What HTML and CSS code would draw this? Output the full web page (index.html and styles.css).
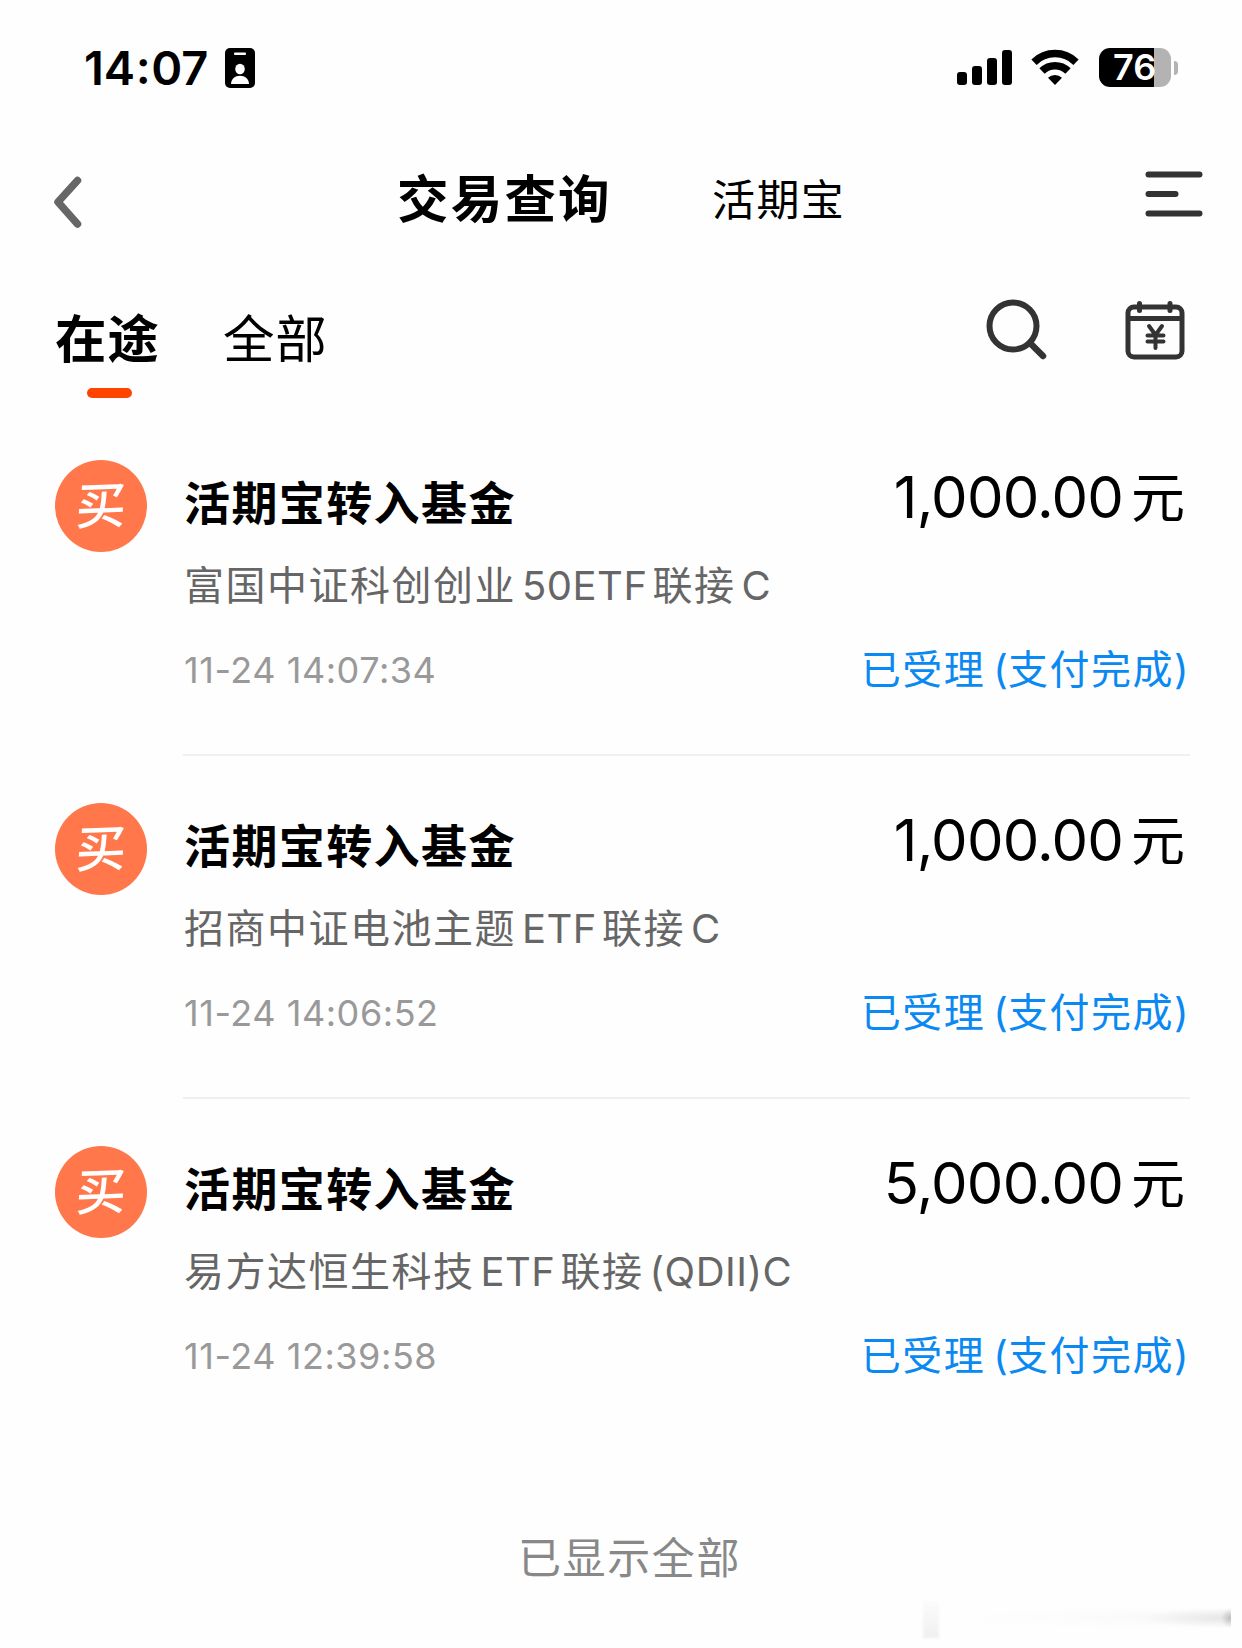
FILE: index.html
```html
<!DOCTYPE html>
<html lang="zh-CN">
<head>
    <meta charset="UTF-8">
    <meta name="viewport" content="width=device-width, initial-scale=1.0">
    <title>交易查询</title>
    <link rel="stylesheet" href="styles.css">
</head>
<body>
    <div class="status-bar">
        <span class="time">14<span class="colon">:</span>07</span>
        <svg class="id-icon" width="30" height="40" viewBox="0 0 30 40">
            <rect width="30" height="40" rx="5"/>
            <rect x="9" y="4.5" width="12" height="2.5" rx="1" fill="#fff"/>
            <ellipse cx="15" cy="21" rx="4.8" ry="5.3" fill="#fff"/>
            <path d="M6 36c0-5 4-8.300 9-8.300s9 3.300 9 8.300z" fill="#fff"/>
        </svg>
        <div class="status-right">
            <svg class="signal" width="55" height="35" viewBox="0 0 55 35">
                <rect x="0" y="22" width="10" height="13" rx="3"/>
                <rect x="15" y="16" width="10" height="19" rx="3"/>
                <rect x="30" y="8" width="10" height="27" rx="3"/>
                <rect x="45" y="0" width="10" height="35" rx="3"/>
            </svg>
            <svg class="wifi" width="48" height="36" viewBox="0 0 48 36">
                <path d="M3 13.200a30 30 0 0 1 42 0" fill="none" stroke="#000" stroke-width="7.500"/>
                <path d="M11 22a18.500 18.500 0 0 1 26 0" fill="none" stroke="#000" stroke-width="7.500"/>
                <path d="M24 36l-7-7.300a10.500 10.500 0 0 1 14 0z"/>
            </svg>
            <div class="battery"><span>76</span></div>
            <div class="battery-tip"></div>
        </div>
    </div>

    <div class="nav">
        <svg class="back" width="30" height="54" viewBox="0 0 30 54">
            <path d="M24.500 5.500L5 27l19.500 22" fill="none" stroke="#666" stroke-width="7.500" stroke-linecap="round" stroke-linejoin="round"/>
        </svg>
        <h1>交易查询</h1>
        <span class="nav-link">活期宝</span>
        <svg class="menu" width="58" height="46" viewBox="0 0 58 46">
            <path d="M3.500 3.500h51M3.500 23h27M3.500 42.500h51" stroke="#333" stroke-width="6" stroke-linecap="round"/>
        </svg>
    </div>

    <div class="tabs">
        <div class="tab active">在途</div>
        <div class="tab">全部</div>
        <svg class="search" width="62" height="62" viewBox="0 0 62 62" fill="none" stroke="#333">
            <circle cx="27" cy="27" r="23.500" stroke-width="6"/>
            <path d="M44 44l13 13" stroke-width="6.500" stroke-linecap="round"/>
        </svg>
        <svg class="calendar" width="60" height="60" viewBox="0 0 60 60" fill="none" stroke="#333" stroke-width="5" stroke-linecap="round">
            <rect x="3" y="7" width="54" height="50" rx="6"/>
            <path d="M3.500 18.500h53M14.500 3.500v7M45 3.500v7"/>
            <path d="M24 26l6.500 9 6.500-9M22.500 35.500h16M22.500 41.500h16M30.500 36v12" stroke-width="4"/>
        </svg>
    </div>

    <div class="list">
        <div class="item">
            <div class="avatar"><span>买</span></div>
            <div class="info">
                <div class="row top"><b>活期宝转入基金</b><span class="amount">1,000.00<i>元</i></span></div>
                <div class="fund">富国中证科创创业<em>50ETF</em>联接<em>C</em></div>
                <div class="row bottom"><span class="date">11-24 14:07:34</span><span class="state">已受理<em>(</em>支付完成)</span></div>
            </div>
        </div>
        <div class="item">
            <div class="avatar"><span>买</span></div>
            <div class="info">
                <div class="row top"><b>活期宝转入基金</b><span class="amount">1,000.00<i>元</i></span></div>
                <div class="fund">招商中证电池主题<em>ETF</em>联接<em>C</em></div>
                <div class="row bottom"><span class="date">11-24 14:06:52</span><span class="state">已受理<em>(</em>支付完成)</span></div>
            </div>
        </div>
        <div class="item">
            <div class="avatar"><span>买</span></div>
            <div class="info">
                <div class="row top"><b>活期宝转入基金</b><span class="amount">5,000.00<i>元</i></span></div>
                <div class="fund">易方达恒生科技<em>ETF</em>联接<em>(QDII)C</em></div>
                <div class="row bottom"><span class="date">11-24 12:39:58</span><span class="state">已受理<em>(</em>支付完成)</span></div>
            </div>
        </div>
    </div>

    <div class="end">已显示全部</div>
    <div class="smudge"></div>
</body>
</html>
```

FILE: styles.css
```css
* { box-sizing: border-box; }
body { margin: 0; width: 1242px; height: 1648px; overflow: hidden; position: relative; background: #fefefe; color: #000; font-family: Inter, "Noto Sans CJK SC", sans-serif; }
svg { display: block; flex: none; }
em, i { font-style: normal; }

/* Status bar */
.status-bar { display: flex; height: 136px; padding: 48px 64px 0 84px; }
.time { width: 141px; font-size: 47px; font-weight: 600; line-height: 40px; white-space: nowrap; }
.colon { display: inline-block; margin: 0 0.5px; transform: translateY(-1px); }
.status-right { display: flex; margin-left: auto; }
.signal { margin: 2px 19px 0 0; }
.wifi { margin: 1px 20px 0 0; }
.battery { width: 72px; height: 39px; border-radius: 11px; background: linear-gradient(90deg, #000 55px, #b3b3b3 55px); color: #fff; font-size: 36px; font-weight: 600; line-height: 39px; padding-left: 14px; }
.battery-tip { width: 4px; height: 14px; margin: 13px 0 0 3px; border-radius: 0 4px 4px 0; background: #b3b3b3; }

/* Title bar */
.nav { display: flex; height: 140px; padding: 0 39px 0 53px; }
.back { margin-top: 39px; }
.nav h1 { margin: 23px 0 0 314px; width: 315px; font-size: 51.5px; font-weight: 700; line-height: 80px; letter-spacing: 2.2px; }
.nav-link { margin-top: 24px; font-size: 43px; line-height: 80px; letter-spacing: 1.4px; }
.menu { margin: 35px 0 0 auto; }

/* Tabs */
.tabs { display: flex; height: 184px; padding: 0 57px 0 55px; }
.tab { width: 168px; font-size: 51.5px; line-height: 76px; margin-top: 25px; letter-spacing: 0.8px; }
.tab.active { font-weight: 700; }
.tab.active::after { content: ""; display: block; width: 45px; height: 10px; margin: 11px 0 0 32px; border-radius: 5px; background: #ff4400; }
.search { margin: 23px 77px 0 auto; }
.calendar { margin-top: 24px; }

/* Transactions */
.item { display: flex; height: 343px; padding: 0 52px 0 55px; }
.avatar { flex: none; width: 92px; height: 92px; border-radius: 50%; background: #ff774a; color: #fff; font-size: 50px; font-weight: 500; line-height: 88px; text-align: center; }
.avatar span { display: block; transform: translateY(2px) skewX(-4deg) rotate(-2deg); }
.info { flex: 1; height: 296px; margin-left: 36px; padding-left: 1px; border-bottom: 2px solid #f0f0f0; }
.item:last-child .info { border: 0; }
.row { display: flex; justify-content: space-between; white-space: nowrap; }
.top { height: 90px; padding-right: 5px; }
.top b { font-size: 46px; line-height: 86px; letter-spacing: 1.4px; }
.amount { font-size: 58px; line-height: 74px; letter-spacing: -0.8px; }
.amount i { font-size: 54px; margin-left: 8px; letter-spacing: 0; }
.fund { height: 80px; font-size: 40px; line-height: 71px; letter-spacing: 1.5px; color: #666; }
.fund em { margin: 0 5px 0 6px; letter-spacing: 0.5px; }
.date { color: #999; font-size: 36px; line-height: 80px; letter-spacing: 0.55px; }
.state { color: #0b89f2; font-size: 40px; line-height: 79px; letter-spacing: 1.5px; }
.state em { margin-left: 8px; letter-spacing: 0; }

.end { margin-top: 39px; text-align: center; font-size: 43px; line-height: 60px; letter-spacing: 1.6px; color: #888; padding-left: 17px; }

/* Faint shadow in the bottom corner */
.smudge { position: absolute; left: 923px; top: 1600px; width: 308px; height: 38px; }
.smudge::before { content: ""; position: absolute; left: 0; top: 0; width: 16px; height: 38px; background: linear-gradient(#fcfcfc, #f0f0f0); filter: blur(1px); }
.smudge::after { content: ""; position: absolute; right: 0; top: 6px; width: 286px; height: 24px; background: radial-gradient(ellipse 10px 10px at 100% 50%, rgba(0, 0, 0, 0.18), transparent), radial-gradient(ellipse 90px 10px at 100% 50%, rgba(0, 0, 0, 0.08), transparent), radial-gradient(ellipse 286px 12px at 100% 50%, rgba(0, 0, 0, 0.025), transparent); }
```
